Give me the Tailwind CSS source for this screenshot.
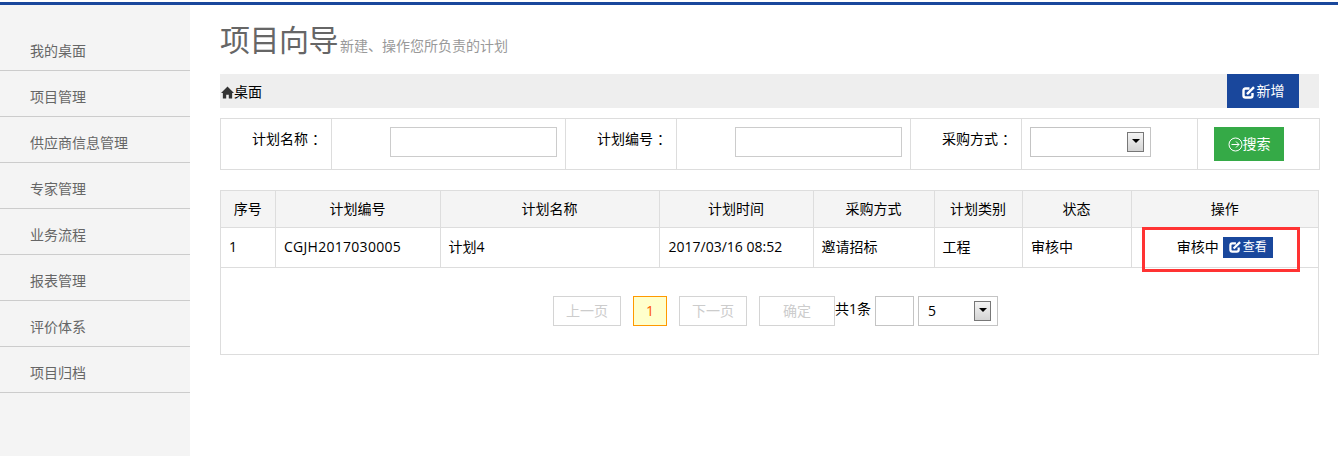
<!DOCTYPE html>
<html lang="zh-CN">
<head>
  <meta charset="UTF-8" />
  <title>项目向导</title>
  <script src="https://cdn.jsdelivr.net/npm/@tailwindcss/browser@4"></script>
</head>
<body class="bg-white text-black text-[14px] leading-[20px] font-['Open_Sans','Noto_Sans_CJK_SC',sans-serif] h-[456px] overflow-hidden">
  <div class="mt-[2px] h-[3px] bg-[#19479c]"></div>
  <div class="flex h-[451px]">
    <!-- side menu -->
    <aside class="w-[190px] shrink-0 bg-[#f4f4f4] pt-[20px] text-[#666]">
      <a class="flex h-[46px] items-center pl-[30px] pt-[6px] border-b border-[#ccc]">我的桌面</a>
      <a class="flex h-[46px] items-center pl-[30px] pt-[6px] border-b border-[#ccc]">项目管理</a>
      <a class="flex h-[46px] items-center pl-[30px] pt-[6px] border-b border-[#ccc]">供应商信息管理</a>
      <a class="flex h-[46px] items-center pl-[30px] pt-[6px] border-b border-[#ccc]">专家管理</a>
      <a class="flex h-[46px] items-center pl-[30px] pt-[6px] border-b border-[#ccc]">业务流程</a>
      <a class="flex h-[46px] items-center pl-[30px] pt-[6px] border-b border-[#ccc]">报表管理</a>
      <a class="flex h-[46px] items-center pl-[30px] pt-[6px] border-b border-[#ccc]">评价体系</a>
      <a class="flex h-[46px] items-center pl-[30px] pt-[6px] border-b border-[#ccc]">项目归档</a>
    </aside>

    <main class="w-[1099px] ml-[30px]">
      <div class="h-[69px] pt-[15px] flex items-end pb-[15px] text-[#666]">
        <h1 class="text-[30px] leading-[38px] font-normal tracking-[-0.5px]">项目向导</h1>
        <span class="ml-[2px] text-[#999] text-[14px] leading-[20px] mb-[3px]">新建、操作您所负责的计划</span>
      </div>

      <div class="h-[34px] bg-[#eee] flex items-center justify-between pr-[20px]">
        <div class="flex items-center pl-[1px] pt-[1px]">
          <svg class="w-[13px] h-[13px] mt-[1px]" viewBox="0 0 14 13"><path fill="#333" d="M7 0 0 7H2V13H5.6V9H8.4V13H12V7H14Z"/></svg>
          <span>桌面</span>
        </div>
        <button class="w-[72px] h-[34px] bg-[#19479c] text-white flex items-center justify-center">
          <svg class="w-[13px] h-[13px] mr-[2px] mt-[3px]" viewBox="0 0 13 13" fill="none" stroke="#fff" stroke-width="2.4"><path d="M7.5 2.5H3.5Q1.5 2.5 1.5 4.5V9.5Q1.5 11.5 3.5 11.5H8.5Q10.5 11.5 10.5 9.5V7"/><path d="M5 8.2 12 1.2"/></svg>
          <span>新增</span>
        </button>
      </div>

      <!-- search -->
      <table class="mt-[10px] w-[1099px] h-[52px] table-fixed border-collapse border border-[#ddd]">
        <colgroup><col class="w-[111px]"><col class="w-[234px]"><col class="w-[111px]"><col class="w-[234px]"><col class="w-[111px]"><col class="w-[176px]"><col class="w-[122px]"></colgroup>
        <tr>
          <td class="border border-[#ddd] align-top pt-[9px] pr-[5px] text-right">计划名称<span class="ml-[4px] font-['Noto_Sans_CJK_TC']">：</span></td>
          <td class="border border-[#ddd] align-top pt-[8px] pl-[58px]"><input class="block w-[167px] h-[30px] border border-[#ccc] bg-white"></td>
          <td class="border border-[#ddd] align-top pt-[9px] pr-[5px] text-right">计划编号<span class="ml-[4px] font-['Noto_Sans_CJK_TC']">：</span></td>
          <td class="border border-[#ddd] align-top pt-[8px] pl-[58px]"><input class="block w-[167px] h-[30px] border border-[#ccc] bg-white"></td>
          <td class="border border-[#ddd] align-top pt-[9px] pr-[5px] text-right">采购方式<span class="ml-[4px] font-['Noto_Sans_CJK_TC']">：</span></td>
          <td class="border border-[#ddd] align-top pt-[8px] pl-[8px]">
            <div class="w-[121px] h-[30px] border border-[#c4c4c4] flex items-center justify-end pr-[6px]">
              <div class="w-[17px] h-[20px] border border-[#777] bg-gradient-to-b from-[#f4f4f4] to-[#d4d4d4] flex items-start justify-center pt-[6px]"><div class="w-0 h-0 border-x-[4px] border-x-transparent border-t-[4px] border-t-black"></div></div>
            </div>
          </td>
          <td class="border border-[#ddd] pl-[16px]">
            <button class="w-[70px] h-[34px] bg-[#35aa47] text-white flex items-center justify-center">
              <svg class="w-[15px] h-[15px]" viewBox="0 0 15 15" fill="none" stroke="#fff"><circle cx="7.5" cy="7.5" r="6.5"/><path d="M3.5 7.5H11M8 4.5 11 7.5 8 10.5"/></svg>
              <span>搜索</span>
            </button>
          </td>
        </tr>
      </table>

      <!-- plans -->
      <div class="mt-[20px] border border-[#ddd] w-[1099px] h-[165px]">
        <table class="w-[1097px] table-fixed border-collapse">
          <colgroup><col class="w-[54px]"><col class="w-[165px]"><col class="w-[219px]"><col class="w-[154px]"><col class="w-[121px]"><col class="w-[88px]"><col class="w-[109px]"><col class="w-[187px]"></colgroup>
          <tr class="h-[36px] bg-[#f4f4f4] border-b border-[#ddd] text-center">
            <th class="font-normal border-r border-[#ddd]">序号</th>
            <th class="font-normal border-r border-[#ddd]">计划编号</th>
            <th class="font-normal border-r border-[#ddd]">计划名称</th>
            <th class="font-normal border-r border-[#ddd]">计划时间</th>
            <th class="font-normal border-r border-[#ddd]">采购方式</th>
            <th class="font-normal border-r border-[#ddd]">计划类别</th>
            <th class="font-normal border-r border-[#ddd]">状态</th>
            <th class="font-normal">操作</th>
          </tr>
          <tr class="h-[40px] border-b border-[#ddd]">
            <td class="border-r border-[#ddd] pl-[8px]">1</td>
            <td class="border-r border-[#ddd] pl-[8.5px] tracking-[0.28px]">CGJH2017030005</td>
            <td class="border-r border-[#ddd] pl-[8px]">计划4</td>
            <td class="border-r border-[#ddd] pl-[9px]">2017/03/16 08:52</td>
            <td class="border-r border-[#ddd] pl-[8px]">邀请招标</td>
            <td class="border-r border-[#ddd] pl-[8px]">工程</td>
            <td class="border-r border-[#ddd] pl-[8.5px]">审核中</td>
            <td>
              <div class="flex items-center justify-center gap-[4px]">
                <span>审核中</span>
                <button class="w-[50px] h-[21px] bg-[#19479c] text-white text-[12px] flex items-center justify-center gap-[2px]">
                  <svg class="w-[12px] h-[12px]" viewBox="0 0 13 13" fill="none" stroke="#fff" stroke-width="2.4"><path d="M7.5 2.5H3.5Q1.5 2.5 1.5 4.5V9.5Q1.5 11.5 3.5 11.5H8.5Q10.5 11.5 10.5 9.5V7"/><path d="M5 8.2 12 1.2"/></svg>
                  <span>查看</span>
                </button>
              </div>
            </td>
          </tr>
        </table>
        <!-- pager -->
        <div class="flex items-start pt-[28px] pl-[332px]">
          <span class="w-[68px] h-[30px] border border-[#d4d4d4] text-[#ccc] flex items-center justify-center">上一页</span>
          <span class="ml-[12px] w-[34px] h-[30px] border border-[#f90] bg-[#ffc] text-[#f50] flex items-center justify-center">1</span>
          <span class="ml-[12px] w-[68px] h-[30px] border border-[#d4d4d4] text-[#ccc] flex items-center justify-center">下一页</span>
          <span class="ml-[12px] w-[76px] h-[30px] border border-[#d4d4d4] text-[#ccc] flex items-center justify-center">确定</span>
          <span class="h-[26px] flex items-center">共1条</span>
          <input class="ml-[4px] w-[39px] h-[30px] border border-[#c4c4c4]">
          <div class="ml-[4px] w-[80px] h-[30px] border border-[#c4c4c4] flex items-center justify-between pl-[9px] pr-[6px]">
            <span>5</span>
            <div class="w-[17px] h-[20px] border border-[#777] bg-gradient-to-b from-[#f4f4f4] to-[#d4d4d4] flex items-start justify-center pt-[6px]"><div class="w-0 h-0 border-x-[4px] border-x-transparent border-t-[4px] border-t-black"></div></div>
          </div>
        </div>
      </div>
    </main>
  </div>
  <!-- annotation drawn over the page -->
  <div class="absolute left-[1142px] top-[227px] w-[158px] h-[45px] border-[3px] border-[#f33]"></div>
</body>
</html>
